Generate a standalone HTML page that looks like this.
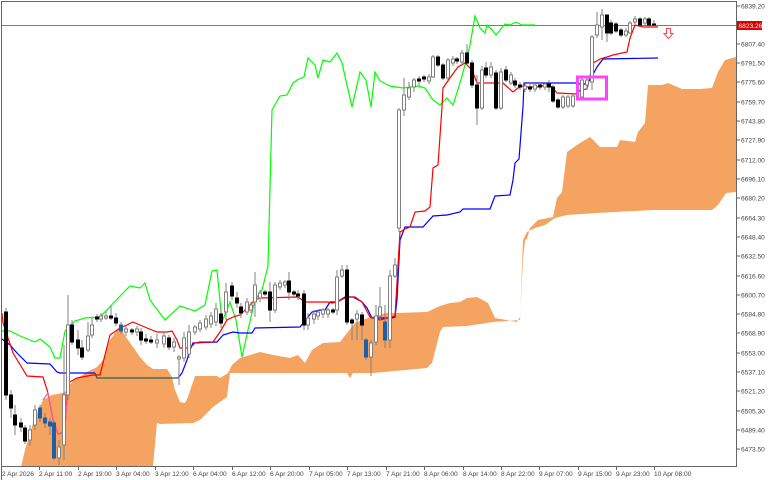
<!DOCTYPE html>
<html><head><meta charset="utf-8"><style>
html,body{margin:0;padding:0;background:#fff;width:768px;height:480px;overflow:hidden}
svg{display:block}
text{font-family:"Liberation Sans",sans-serif;font-size:6.6px;fill:#444}
</style></head><body>
<svg width="768" height="480" viewBox="0 0 768 480" xmlns="http://www.w3.org/2000/svg">
<rect width="768" height="480" fill="#fff"/>
<polygon fill="#F4A460" points="21,467 25,450 33,423 43,400 52,395 62,393 65,392 68,387 72,382 87,372 97,367 103,360 110,340 115,333 120,327 123,332 128,340 133,347 140,357 147,365 153,369 167,369 172,377 175,390 180,402 185,403 188,397 192,385 195,376 217,376 220,378 228,373 232,365 240,358 250,355 260,352 273,355 290,358 298,355 305,363 312,350 323,343 340,342 347,333 355,323 362,320 377,315 387,313 397,313 427,312 440,306 450,303 460,302 467,298 477,297 488,303 495,318 517,322 520,317 523,260 525,240 527,239 530,228 538,220 553,217 557,198 562,192 567,152 580,143 590,137 600,147 617,147 620,140 635,142 638,132 645,123 648,85 662,85 668,83 682,89 700,89 712,88 718,72 725,60 736,57 736,192 726,193 718,205 712,210 653,210 597,213 567,215 555,218 545,225 535,228 527,232 523,240 520,320 493,322 467,326 443,327 440,332 432,363 427,368 373,373 353,373 350,378 347,373 240,373 230,373 227,397 213,407 200,420 193,423 160,424 157,423 153,466 21,466"/>
<line x1="2" y1="25.5" x2="736" y2="25.5" stroke="#cc5560" stroke-width="1"/>
<polyline fill="none" stroke="#00ff00" stroke-width="1.2" points="2,331 10,331 20,336 35,342 40,339 50,347 55,358 60,358 65,331 75,321 85,318 100,317 125,291 130,286 140,288 145,283 150,300 165,320 180,306 195,311 205,305 212,271 217,270 222,322 230,302 236,320 242,357 248,330 255,300 262,290 268,266 272,110 280,96 287,95 293,83 297,80 304,77 308,58 315,65 318,78 323,60 330,62 337,53 342,63 352,107 360,72 366,80 371,107 375,72 380,81 390,86 403,88 418,86 425,88 433,100 440,105 447,98 453,105 460,83 465,65 470,45 475,16 480,28 485,33 487,25 492,30 496,35 505,24 510,25 516,22 522,25 535,25"/>
<polyline fill="none" stroke="#0000ff" stroke-width="1.2" points="2,339 10,345 17,353 27,363 50,364 57,372 60,373 95,373"/>
<polyline fill="none" stroke="#2f5f4f" stroke-width="1.3" points="95,373 97,378 178,378"/>
<polyline fill="none" stroke="#0000ff" stroke-width="1.2" points="178,378 182,373 187,360 190,350 193,343 217,342 223,335 233,332 240,333 252,333 255,328 300,327 312,312 320,310 325,310 330,302 337,302 345,297 353,297 362,302 367,308 372,318 392,318 395,317 397,300 400,240 405,227 423,227 433,216 447,215 460,212 463,209 490,209 495,196 510,195 513,180 515,163 519,159 523,107 524,83 577,83 583,85 590,80 597,67 603,59 658,58"/>
<polyline fill="none" stroke="#ff0000" stroke-width="1.2" points="2,313 3,323 13,353 27,376 43,377 48,393 53,420 58,434 62,433 65,427 68,383 77,378 93,375 100,375 110,335 120,328 127,325 133,322 140,325 147,328 157,332 167,332 172,331 177,340 180,348 190,348 195,343 200,342 213,342 220,332 227,320 233,317 240,315 247,308 255,300 260,298 298,297 305,302 327,302 332,303 337,302 347,297 355,297 362,302 370,317 380,320 395,316 400,232 405,229 410,227 415,212 425,211 430,207 433,168 438,165 442,107 443,88 452,75 458,67 465,63 472,70 477,83 503,83 513,92 518,88 523,86 528,87 537,87 547,85 552,87 557,93 577,94 580,90 587,89 588,85 593,63 600,59 607,57 613,55 627,52 630,38 635,25 643,27 658,27"/>
<polyline fill="none" stroke="#f060a0" stroke-width="1.2" points="43,400 48,393 53,420 58,434 62,433 65,427 68,390"/>
<g stroke="#808080" stroke-width="1">
<line x1="6" y1="308" x2="6" y2="400"/><rect x="4.5" y="312" width="3" height="83" fill="#000" stroke="#000"/>
<line x1="11" y1="390" x2="11" y2="418"/><rect x="9.5" y="395" width="3" height="13" fill="#000" stroke="#000"/>
<line x1="15" y1="405" x2="15" y2="435"/><rect x="13.5" y="415" width="3" height="10" fill="#000" stroke="#000"/>
<line x1="21" y1="418" x2="21" y2="432"/><rect x="19.5" y="423" width="3" height="4" fill="#000" stroke="#000"/>
<line x1="25" y1="425" x2="25" y2="444"/><rect x="23.5" y="428" width="3" height="13" fill="#000" stroke="#000"/>
<line x1="30" y1="425" x2="30" y2="446"/><rect x="28.5" y="430" width="3" height="10" fill="#fff"/>
<line x1="35" y1="405" x2="35" y2="430"/><rect x="33.5" y="410" width="3" height="15" fill="#fff"/>
<line x1="40" y1="405" x2="40" y2="422"/><rect x="38.5" y="408" width="3" height="10" fill="#1f5fa8" stroke="#1f5fa8"/>
<line x1="45" y1="413" x2="45" y2="428"/><rect x="43.5" y="418" width="3" height="5" fill="#1f5fa8" stroke="#1f5fa8"/>
<line x1="50" y1="418" x2="50" y2="435"/><rect x="48.5" y="422" width="3" height="4" fill="#1f5fa8" stroke="#1f5fa8"/>
<line x1="54" y1="420" x2="54" y2="460"/><rect x="52.5" y="423" width="3" height="35" fill="#1f5fa8" stroke="#1f5fa8"/>
<line x1="59" y1="440" x2="59" y2="465"/><rect x="57.5" y="447" width="3" height="11" fill="#fff"/>
<line x1="64" y1="345" x2="64" y2="460"/><rect x="62.5" y="395" width="3" height="50" fill="#fff"/>
<line x1="68" y1="295" x2="68" y2="400"/><rect x="66.5" y="325" width="3" height="70" fill="#fff"/>
<line x1="72" y1="320" x2="72" y2="345"/><rect x="70.5" y="325" width="3" height="17" fill="#000" stroke="#000"/>
<line x1="78" y1="330" x2="78" y2="355"/><rect x="76.5" y="340" width="3" height="8" fill="#000" stroke="#000"/>
<line x1="82" y1="340" x2="82" y2="360"/><rect x="80.5" y="348" width="3" height="9" fill="#000" stroke="#000"/>
<line x1="88" y1="322" x2="88" y2="352"/><rect x="86.5" y="336" width="3" height="14" fill="#fff"/>
<line x1="92" y1="318" x2="92" y2="338"/><rect x="90.5" y="325" width="3" height="10" fill="#fff"/>
<line x1="97" y1="314" x2="97" y2="322"/><rect x="95.5" y="317" width="3" height="2" fill="#000" stroke="#000"/>
<line x1="101" y1="313" x2="101" y2="322"/><rect x="99.5" y="316" width="3" height="3" fill="#fff"/>
<line x1="106" y1="312" x2="106" y2="320"/><rect x="104.5" y="316" width="3" height="2" fill="#fff"/>
<line x1="111" y1="306" x2="111" y2="320"/><rect x="109.5" y="316" width="3" height="2" fill="#000" stroke="#000"/>
<line x1="116" y1="313" x2="116" y2="326"/><rect x="114.5" y="318" width="3" height="5" fill="#000" stroke="#000"/>
<line x1="121" y1="322" x2="121" y2="334"/><rect x="119.5" y="325" width="3" height="6" fill="#1f5fa8" stroke="#1f5fa8"/>
<line x1="126" y1="326" x2="126" y2="336"/><rect x="124.5" y="329" width="3" height="3" fill="#fff"/>
<line x1="132" y1="328" x2="132" y2="335"/><rect x="130.5" y="330" width="3" height="2" fill="#000" stroke="#000"/>
<line x1="137" y1="326" x2="137" y2="336"/><rect x="135.5" y="329" width="3" height="3" fill="#fff"/>
<line x1="141" y1="328" x2="141" y2="345"/><rect x="139.5" y="332" width="3" height="8" fill="#000" stroke="#000"/>
<line x1="146" y1="334" x2="146" y2="344"/><rect x="144.5" y="339" width="3" height="2" fill="#000" stroke="#000"/>
<line x1="151" y1="336" x2="151" y2="344"/><rect x="149.5" y="340" width="3" height="2" fill="#000" stroke="#000"/>
<line x1="157" y1="334" x2="157" y2="348"/><rect x="155.5" y="340" width="3" height="3" fill="#fff"/>
<line x1="164" y1="332" x2="164" y2="348"/><rect x="162.5" y="336" width="3" height="8" fill="#fff"/>
<line x1="169" y1="335" x2="169" y2="350"/><rect x="167.5" y="338" width="3" height="9" fill="#000" stroke="#000"/>
<line x1="174" y1="338" x2="174" y2="352"/><rect x="172.5" y="342" width="3" height="5" fill="#fff"/>
<line x1="179" y1="355" x2="179" y2="385"/><rect x="177.5" y="357" width="3" height="2" fill="#fff"/>
<line x1="184" y1="332" x2="184" y2="362"/><rect x="182.5" y="338" width="3" height="20" fill="#fff"/>
<line x1="189" y1="325" x2="189" y2="358"/><rect x="187.5" y="332" width="3" height="22" fill="#fff"/>
<line x1="195" y1="325" x2="195" y2="335"/><rect x="193.5" y="327" width="3" height="5" fill="#fff"/>
<line x1="200" y1="320" x2="200" y2="332"/><rect x="198.5" y="323" width="3" height="6" fill="#fff"/>
<line x1="206" y1="315" x2="206" y2="330"/><rect x="204.5" y="319" width="3" height="8" fill="#fff"/>
<line x1="211" y1="312" x2="211" y2="328"/><rect x="209.5" y="316" width="3" height="8" fill="#fff"/>
<line x1="216" y1="303" x2="216" y2="326"/><rect x="214.5" y="309" width="3" height="13" fill="#fff"/>
<line x1="221" y1="308" x2="221" y2="328"/><rect x="219.5" y="314" width="3" height="9" fill="#000" stroke="#000"/>
<line x1="226" y1="283" x2="226" y2="320"/><rect x="224.5" y="292" width="3" height="20" fill="#fff"/>
<line x1="232" y1="282" x2="232" y2="300"/><rect x="230.5" y="286" width="3" height="10" fill="#000" stroke="#000"/>
<line x1="237" y1="292" x2="237" y2="308"/><rect x="235.5" y="298" width="3" height="5" fill="#000" stroke="#000"/>
<line x1="241" y1="303" x2="241" y2="318"/><rect x="239.5" y="307" width="3" height="6" fill="#000" stroke="#000"/>
<line x1="247" y1="298" x2="247" y2="315"/><rect x="245.5" y="302" width="3" height="10" fill="#fff"/>
<line x1="251" y1="302" x2="251" y2="313"/><rect x="249.5" y="305" width="3" height="5" fill="#fff"/>
<line x1="255" y1="272" x2="255" y2="317"/><rect x="253.5" y="285" width="3" height="17" fill="#fff"/>
<line x1="260" y1="290" x2="260" y2="302"/><rect x="258.5" y="293" width="3" height="5" fill="#fff"/>
<line x1="265" y1="290" x2="265" y2="296"/><rect x="263.5" y="292" width="3" height="2" fill="#000" stroke="#000"/>
<line x1="270" y1="282" x2="270" y2="322"/><rect x="268.5" y="292" width="3" height="18" fill="#000" stroke="#000"/>
<line x1="275" y1="282" x2="275" y2="313"/><rect x="273.5" y="285" width="3" height="25" fill="#fff"/>
<line x1="280" y1="280" x2="280" y2="290"/><rect x="278.5" y="283" width="3" height="4" fill="#fff"/>
<line x1="285" y1="280" x2="285" y2="288"/><rect x="283.5" y="282" width="3" height="3" fill="#fff"/>
<line x1="289" y1="272" x2="289" y2="300"/><rect x="287.5" y="281" width="3" height="11" fill="#000" stroke="#000"/>
<line x1="294" y1="290" x2="294" y2="297"/><rect x="292.5" y="292" width="3" height="2" fill="#000" stroke="#000"/>
<line x1="298" y1="290" x2="298" y2="300"/><rect x="296.5" y="294" width="3" height="2" fill="#000" stroke="#000"/>
<line x1="304" y1="290" x2="304" y2="330"/><rect x="302.5" y="294" width="3" height="31" fill="#000" stroke="#000"/>
<line x1="308" y1="313" x2="308" y2="330"/><rect x="306.5" y="318" width="3" height="7" fill="#fff"/>
<line x1="314" y1="310" x2="314" y2="324"/><rect x="312.5" y="314" width="3" height="5" fill="#fff"/>
<line x1="318" y1="310" x2="318" y2="320"/><rect x="316.5" y="312" width="3" height="4" fill="#fff"/>
<line x1="323" y1="308" x2="323" y2="318"/><rect x="321.5" y="310" width="3" height="4" fill="#fff"/>
<line x1="328" y1="308" x2="328" y2="318"/><rect x="326.5" y="310" width="3" height="4" fill="#fff"/>
<line x1="333" y1="308" x2="333" y2="314"/><rect x="331.5" y="310" width="3" height="2" fill="#000" stroke="#000"/>
<line x1="337" y1="270" x2="337" y2="315"/><rect x="335.5" y="277" width="3" height="33" fill="#fff"/>
<line x1="342" y1="265" x2="342" y2="278"/><rect x="340.5" y="270" width="3" height="6" fill="#fff"/>
<line x1="347" y1="265" x2="347" y2="325"/><rect x="345.5" y="270" width="3" height="52" fill="#000" stroke="#000"/>
<line x1="352" y1="318" x2="352" y2="340"/><rect x="350.5" y="320" width="3" height="3" fill="#000" stroke="#000"/>
<line x1="357" y1="310" x2="357" y2="340"/><rect x="355.5" y="314" width="3" height="5" fill="#fff"/>
<line x1="362" y1="312" x2="362" y2="340"/><rect x="360.5" y="315" width="3" height="10" fill="#000" stroke="#000"/>
<line x1="366" y1="338" x2="366" y2="360"/><rect x="364.5" y="340" width="3" height="17" fill="#1f5fa8" stroke="#1f5fa8"/>
<line x1="371" y1="340" x2="371" y2="376"/><rect x="369.5" y="343" width="3" height="14" fill="#fff"/>
<line x1="376" y1="305" x2="376" y2="345"/><rect x="374.5" y="316" width="3" height="26" fill="#fff"/>
<line x1="380" y1="287" x2="380" y2="320"/><rect x="378.5" y="307" width="3" height="9" fill="#fff"/>
<line x1="385" y1="305" x2="385" y2="348"/><rect x="383.5" y="322" width="3" height="18" fill="#1f5fa8" stroke="#1f5fa8"/>
<line x1="390" y1="270" x2="390" y2="348"/><rect x="388.5" y="276" width="3" height="64" fill="#fff"/>
<line x1="395" y1="258" x2="395" y2="278"/><rect x="393.5" y="265" width="3" height="11" fill="#fff"/>
<line x1="399" y1="108" x2="399" y2="232"/><rect x="397.5" y="110" width="3" height="118" fill="#fff"/>
<line x1="404" y1="78" x2="404" y2="116"/><rect x="402.5" y="95" width="3" height="15" fill="#fff"/>
<line x1="409" y1="82" x2="409" y2="100"/><rect x="407.5" y="88" width="3" height="9" fill="#fff"/>
<line x1="414" y1="78" x2="414" y2="92"/><rect x="412.5" y="80" width="3" height="7" fill="#fff"/>
<line x1="419" y1="76" x2="419" y2="86"/><rect x="417.5" y="79" width="3" height="2" fill="#000" stroke="#000"/>
<line x1="424" y1="75" x2="424" y2="82"/><rect x="422.5" y="77" width="3" height="2" fill="#000" stroke="#000"/>
<line x1="429" y1="74" x2="429" y2="84"/><rect x="427.5" y="77" width="3" height="4" fill="#fff"/>
<line x1="433" y1="55" x2="433" y2="78"/><rect x="431.5" y="57" width="3" height="20" fill="#fff"/>
<line x1="438" y1="55" x2="438" y2="67"/><rect x="436.5" y="57" width="3" height="8" fill="#000" stroke="#000"/>
<line x1="443" y1="63" x2="443" y2="80"/><rect x="441.5" y="65" width="3" height="13" fill="#000" stroke="#000"/>
<line x1="448" y1="58" x2="448" y2="80"/><rect x="446.5" y="60" width="3" height="18" fill="#fff"/>
<line x1="453" y1="56" x2="453" y2="66"/><rect x="451.5" y="59" width="3" height="4" fill="#fff"/>
<line x1="457" y1="57" x2="457" y2="64"/><rect x="455.5" y="59" width="3" height="2" fill="#000" stroke="#000"/>
<line x1="462" y1="50" x2="462" y2="64"/><rect x="460.5" y="53" width="3" height="9" fill="#fff"/>
<line x1="467" y1="44" x2="467" y2="65"/><rect x="465.5" y="53" width="3" height="10" fill="#000" stroke="#000"/>
<line x1="472" y1="60" x2="472" y2="88"/><rect x="470.5" y="63" width="3" height="22" fill="#000" stroke="#000"/>
<line x1="477" y1="75" x2="477" y2="125"/><rect x="475.5" y="85" width="3" height="23" fill="#000" stroke="#000"/>
<line x1="482" y1="66" x2="482" y2="110"/><rect x="480.5" y="70" width="3" height="38" fill="#fff"/>
<line x1="486" y1="62" x2="486" y2="78"/><rect x="484.5" y="68" width="3" height="7" fill="#000" stroke="#000"/>
<line x1="491" y1="62" x2="491" y2="78"/><rect x="489.5" y="67" width="3" height="8" fill="#fff"/>
<line x1="496" y1="70" x2="496" y2="110"/><rect x="494.5" y="73" width="3" height="35" fill="#000" stroke="#000"/>
<line x1="501" y1="68" x2="501" y2="110"/><rect x="499.5" y="72" width="3" height="36" fill="#fff"/>
<line x1="506" y1="66" x2="506" y2="82"/><rect x="504.5" y="70" width="3" height="10" fill="#000" stroke="#000"/>
<line x1="511" y1="72" x2="511" y2="85"/><rect x="509.5" y="75" width="3" height="8" fill="#fff"/>
<line x1="515" y1="78" x2="515" y2="88"/><rect x="513.5" y="81" width="3" height="4" fill="#000" stroke="#000"/>
<line x1="520" y1="82" x2="520" y2="90"/><rect x="518.5" y="85" width="3" height="2" fill="#000" stroke="#000"/>
<line x1="525" y1="84" x2="525" y2="92"/><rect x="523.5" y="86" width="3" height="3" fill="#fff"/>
<line x1="530" y1="84" x2="530" y2="92"/><rect x="528.5" y="87" width="3" height="2" fill="#000" stroke="#000"/>
<line x1="535" y1="82" x2="535" y2="92"/><rect x="533.5" y="85" width="3" height="4" fill="#fff"/>
<line x1="540" y1="82" x2="540" y2="90"/><rect x="538.5" y="85" width="3" height="2" fill="#000" stroke="#000"/>
<line x1="545" y1="82" x2="545" y2="90"/><rect x="543.5" y="84" width="3" height="3" fill="#fff"/>
<line x1="549" y1="80" x2="549" y2="92"/><rect x="547.5" y="84" width="3" height="3" fill="#000" stroke="#000"/>
<line x1="553" y1="85" x2="553" y2="103"/><rect x="551.5" y="87" width="3" height="14" fill="#000" stroke="#000"/>
<line x1="558" y1="98" x2="558" y2="109"/><rect x="556.5" y="100" width="3" height="7" fill="#000" stroke="#000"/>
<line x1="563" y1="95" x2="563" y2="109"/><rect x="561.5" y="97" width="3" height="10" fill="#fff"/>
<line x1="568" y1="95" x2="568" y2="108"/><rect x="566.5" y="97" width="3" height="9" fill="#fff"/>
<line x1="573" y1="94" x2="573" y2="108"/><rect x="571.5" y="96" width="3" height="10" fill="#fff"/>
<line x1="582" y1="78" x2="582" y2="99"/><rect x="580.5" y="80" width="3" height="17" fill="#fff"/>
<line x1="587" y1="78" x2="587" y2="90"/><rect x="585.5" y="80" width="3" height="5" fill="#fff"/>
<line x1="592" y1="35" x2="592" y2="90"/><rect x="590.5" y="37" width="3" height="45" fill="#fff"/>
<line x1="597" y1="12" x2="597" y2="38"/><rect x="595.5" y="25" width="3" height="10" fill="#fff"/>
<line x1="602" y1="9" x2="602" y2="40"/><rect x="600.5" y="15" width="3" height="12" fill="#fff"/>
<line x1="607" y1="15" x2="607" y2="42"/><rect x="605.5" y="15" width="3" height="18" fill="#000" stroke="#000"/>
<line x1="611" y1="20" x2="611" y2="35"/><rect x="609.5" y="23" width="3" height="10" fill="#000" stroke="#000"/>
<line x1="616" y1="22" x2="616" y2="33"/><rect x="614.5" y="24" width="3" height="7" fill="#000" stroke="#000"/>
<line x1="621" y1="28" x2="621" y2="37"/><rect x="619.5" y="30" width="3" height="5" fill="#000" stroke="#000"/>
<line x1="626" y1="28" x2="626" y2="37"/><rect x="624.5" y="31" width="3" height="4" fill="#fff"/>
<line x1="630" y1="21" x2="630" y2="34"/><rect x="628.5" y="23" width="3" height="10" fill="#fff"/>
<line x1="635" y1="16" x2="635" y2="24"/><rect x="633.5" y="19" width="3" height="3" fill="#fff"/>
<line x1="640" y1="17" x2="640" y2="27"/><rect x="638.5" y="19" width="3" height="6" fill="#000" stroke="#000"/>
<line x1="645" y1="17" x2="645" y2="25"/><rect x="643.5" y="19" width="3" height="4" fill="#fff"/>
<line x1="649" y1="17" x2="649" y2="27"/><rect x="647.5" y="19" width="3" height="6" fill="#000" stroke="#000"/>
<line x1="654" y1="20" x2="654" y2="27"/><rect x="652.5" y="24" width="3" height="1" fill="#000" stroke="#000"/>
</g>
<rect x="577.5" y="77" width="29" height="22" fill="none" stroke="#ff44ff" stroke-width="3"/>
<path d="M666.5,28.5 h4 v5 h2.5 l-4.5,5 l-4.5,-5 h2.5 z" fill="#fff" stroke="#ff4455" stroke-width="1"/>
<polyline points="1.5,480 1.5,1.5 736.5,1.5 736.5,466.5 1.5,466.5" fill="none" stroke="#666" stroke-width="1"/>
<g stroke="#666">
<line x1="736" y1="6" x2="740" y2="6"/><line x1="736" y1="44" x2="740" y2="44"/><line x1="736" y1="63" x2="740" y2="63"/><line x1="736" y1="82" x2="740" y2="82"/><line x1="736" y1="102" x2="740" y2="102"/><line x1="736" y1="121" x2="740" y2="121"/><line x1="736" y1="140" x2="740" y2="140"/><line x1="736" y1="160" x2="740" y2="160"/><line x1="736" y1="179" x2="740" y2="179"/><line x1="736" y1="198" x2="740" y2="198"/><line x1="736" y1="218" x2="740" y2="218"/><line x1="736" y1="237" x2="740" y2="237"/><line x1="736" y1="256" x2="740" y2="256"/><line x1="736" y1="276" x2="740" y2="276"/><line x1="736" y1="295" x2="740" y2="295"/><line x1="736" y1="314" x2="740" y2="314"/><line x1="736" y1="333" x2="740" y2="333"/><line x1="736" y1="353" x2="740" y2="353"/><line x1="736" y1="372" x2="740" y2="372"/><line x1="736" y1="391" x2="740" y2="391"/><line x1="736" y1="411" x2="740" y2="411"/><line x1="736" y1="430" x2="740" y2="430"/><line x1="736" y1="449" x2="740" y2="449"/>
</g>
<g>
<text x="741" y="8.5">6839.20</text>
<text x="741" y="46.5">6807.40</text><text x="741" y="65.5">6791.50</text><text x="741" y="84.5">6775.60</text><text x="741" y="104.5">6759.70</text><text x="741" y="123.5">6743.80</text><text x="741" y="142.5">6727.90</text><text x="741" y="162.5">6712.00</text><text x="741" y="181.5">6696.10</text><text x="741" y="200.5">6680.20</text><text x="741" y="220.5">6664.30</text><text x="741" y="239.5">6648.40</text><text x="741" y="258.5">6632.50</text><text x="741" y="278.5">6616.60</text><text x="741" y="297.5">6600.70</text><text x="741" y="316.5">6584.80</text><text x="741" y="335.5">6568.90</text><text x="741" y="355.5">6553.00</text><text x="741" y="374.5">6537.10</text><text x="741" y="393.5">6521.20</text><text x="741" y="413.5">6505.30</text><text x="741" y="432.5">6489.40</text><text x="741" y="451.5">6473.50</text>
</g>
<rect x="737" y="21" width="25" height="9" fill="#dd0000"/>
<text x="738.5" y="28" style="fill:#fff">6823.26</text>
<g stroke="#666">
<line x1="39.5" y1="466" x2="39.5" y2="470"/><line x1="78.5" y1="466" x2="78.5" y2="470"/><line x1="116.5" y1="466" x2="116.5" y2="470"/><line x1="155.5" y1="466" x2="155.5" y2="470"/><line x1="193.5" y1="466" x2="193.5" y2="470"/><line x1="232.5" y1="466" x2="232.5" y2="470"/><line x1="270.5" y1="466" x2="270.5" y2="470"/><line x1="309.5" y1="466" x2="309.5" y2="470"/><line x1="347.5" y1="466" x2="347.5" y2="470"/><line x1="386.5" y1="466" x2="386.5" y2="470"/><line x1="424.5" y1="466" x2="424.5" y2="470"/><line x1="463.5" y1="466" x2="463.5" y2="470"/><line x1="501.5" y1="466" x2="501.5" y2="470"/><line x1="539.5" y1="466" x2="539.5" y2="470"/><line x1="578.5" y1="466" x2="578.5" y2="470"/><line x1="616.5" y1="466" x2="616.5" y2="470"/><line x1="654.5" y1="466" x2="654.5" y2="470"/>
</g>
<g>
<text x="2" y="476">2 Apr 2026</text><text x="39" y="476">2 Apr 11:00</text><text x="78" y="476">2 Apr 19:00</text><text x="116" y="476">3 Apr 04:00</text><text x="155" y="476">3 Apr 12:00</text><text x="193" y="476">6 Apr 04:00</text><text x="232" y="476">6 Apr 12:00</text><text x="270" y="476">6 Apr 20:00</text><text x="309" y="476">7 Apr 05:00</text><text x="347" y="476">7 Apr 13:00</text><text x="386" y="476">7 Apr 21:00</text><text x="424" y="476">8 Apr 06:00</text><text x="463" y="476">8 Apr 14:00</text><text x="501" y="476">8 Apr 22:00</text><text x="539" y="476">9 Apr 07:00</text><text x="578" y="476">9 Apr 15:00</text><text x="616" y="476">9 Apr 23:00</text><text x="654" y="476">10 Apr 08:00</text>
</g>
</svg>
</body></html>
